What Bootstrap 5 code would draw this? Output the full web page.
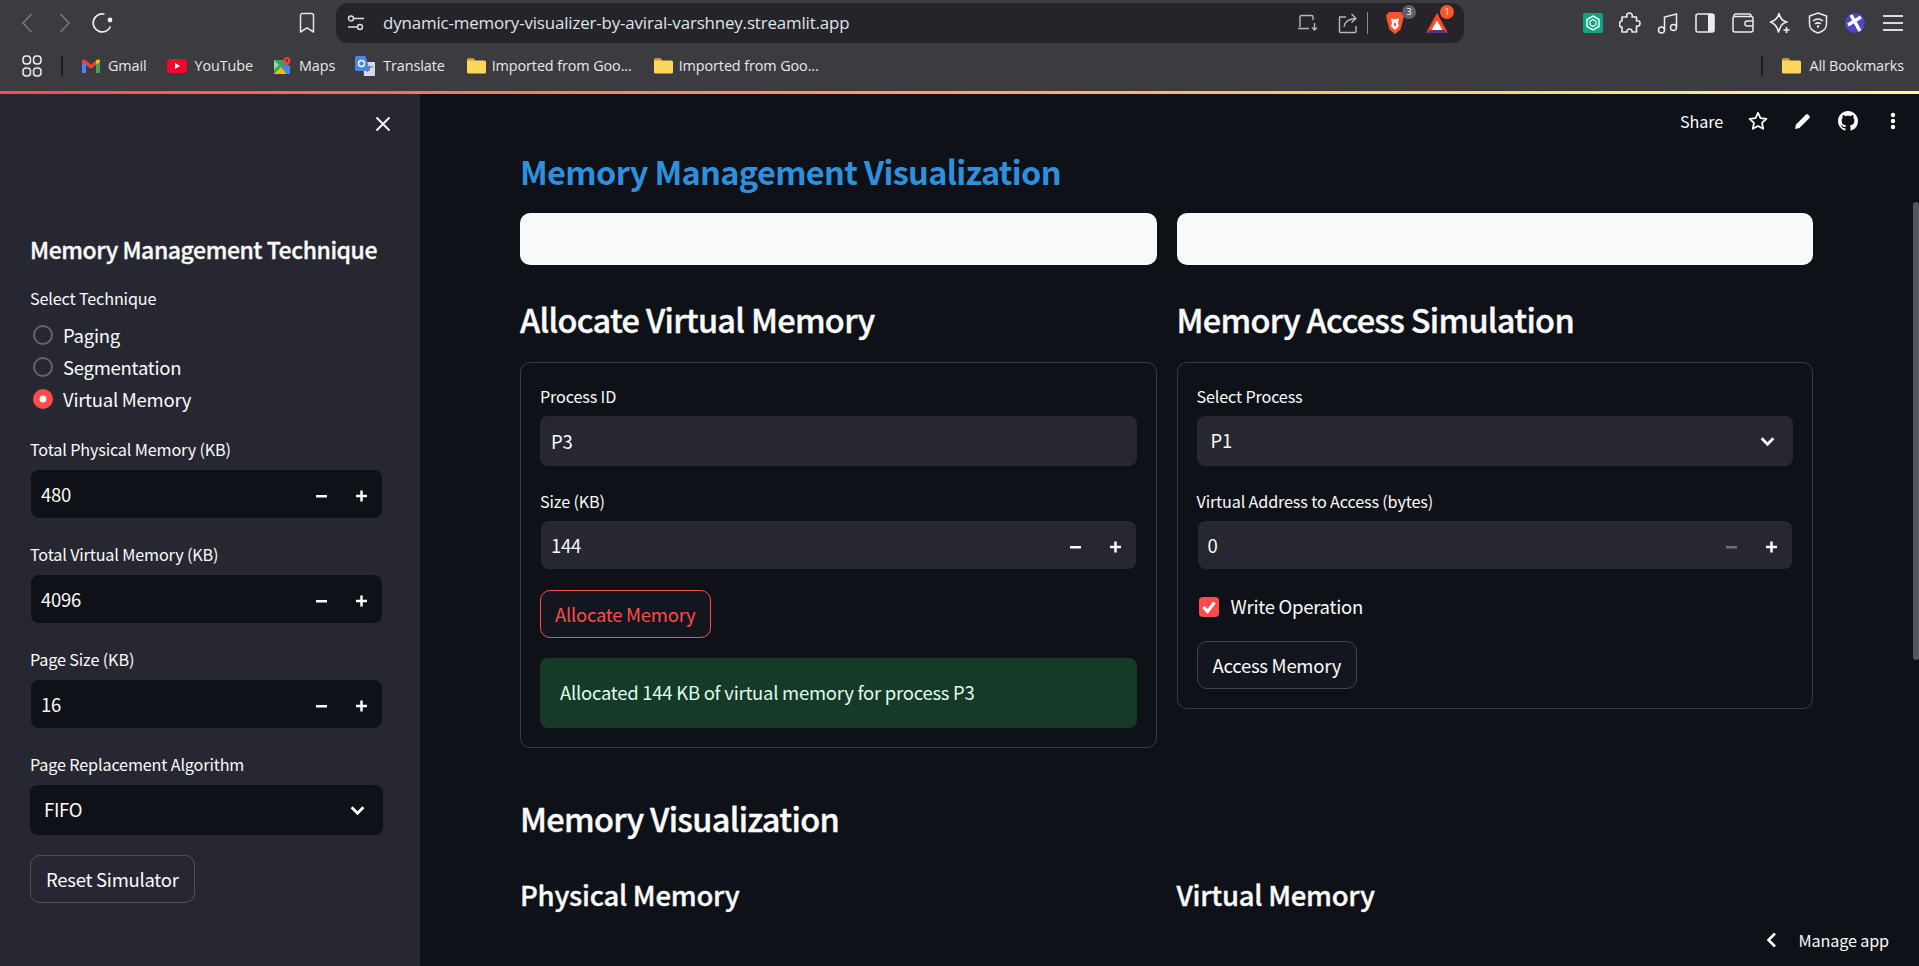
<!DOCTYPE html>
<html lang="en">
<head>
  <meta charset="UTF-8">
  <title>Memory Management Visualization</title>
  <link href="https://cdn.jsdelivr.net/npm/bootstrap@5.3.3/dist/css/bootstrap.min.css" rel="stylesheet">
  <style>
    html, body { height: 100%; }
    body { background: #0e1117; color: #fafafa; overflow: hidden; font-family: "Noto Sans CJK SC", "Noto Sans", sans-serif; font-size: 18.5px; letter-spacing: -.26px; }

    /* browser frame */
    .browser-top { background: #3b3b40; height: 91px; font-family: "Open Sans", "Noto Sans", sans-serif; letter-spacing: 0; }
    .tool-row { height: 44px; padding-top: 1px; }
    .tool-btn { width: 38px; height: 40px; flex: none; }
    .tool-btn svg { display: block; }
    .nav-back { margin-left: 8px; }
    .nav-mark { margin-left: 166px; margin-right: 10px; }
    .url-box { background: #252529; width: 1128px; height: 40px; border-radius: 12px; flex: none; }
    .url-tune { margin-left: 3px; width: 34px; }
    .url-text { color: #dfe3ea; font-size: 16.9px; letter-spacing: -.15px; margin-left: 10px; }
    .url-save { margin-right: -2px; }
    .url-divider { width: 1px; height: 22px; background: #8a8a8e; flex: none; }
    .ext-group { margin-left: 110px; }
    .ext-group .tool-btn { width: 37.5px; }
    .bm-row { height: 46px; padding-bottom: 2px; margin-bottom: 1px; color: #e8e8ea; font-size: 14.4px; letter-spacing: -.1px; }
    .bm-apps { margin-left: 22px; margin-right: 19px; }
    .bm-sep { width: 2px; height: 20px; background: #1d1d20; border-radius: 1px; flex: none; }
    .bm-item { gap: 8px; margin-left: 20px; white-space: nowrap; }
    .bm-item.bm-first { margin-left: 19px; }
    .bm-folder { gap: 6px; margin-left: 22px; }
    .bm-tail { margin-left: auto; margin-right: 15px; }
    .bm-tail .bm-sep { margin-right: 19px; }
    .grad-line { height: 3px; background: linear-gradient(90deg, #ff4b4b, #fffd80); }
    .count-dot { position: absolute; border-radius: 50%; color: #fff; font-size: 9px; line-height: 14px; width: 14px; height: 14px; text-align: center; }
    .dot-gray { background: #5f6068; right: -2px; top: 2px; }
    .dot-red { background: #fb542b; right: 2px; top: 2px; }

    /* app */
    .app-shell { height: 875px; }
    .side-panel { width: 420px; flex: none; background: #262730; padding: 0 37px 0 30px; }
    .close-row { height: 60px; margin-right: -8px; }
    .side-title { font-size: 23px; font-weight: 500; letter-spacing: -.44px; -webkit-text-stroke: .35px #fafafa; line-height: 40px; margin: 75px 0 0; white-space: nowrap; }
    .field-label { display: block; font-size: 16.2px; letter-spacing: -.15px; line-height: 22px; margin: 0 0 9px; }
    .first-label { margin-top: 18px; }
    .radio-row { height: 32px; margin: 0; padding: 0 0 0 33px; display: flex; align-items: center; min-height: 0; }
    .radio-row .form-check-input { width: 20px; height: 20px; margin: 0 0 0 -30px; background-color: transparent; border: 2px solid #63646c; flex: none; }
    .radio-row .form-check-input:checked { background-color: #ff4b4b; border-color: #ff4b4b; background-image: url("data:image/svg+xml,%3csvg xmlns='http://www.w3.org/2000/svg' viewBox='-4 -4 8 8'%3e%3ccircle r='1.7' fill='%23fff'/%3e%3c/svg%3e"); }
    .radio-row .form-check-label { margin-left: 10px; line-height: 32px; }
    .radio-list { margin-top: 10px; margin-bottom: 23px; }
    .side-field { margin-bottom: 24px; }
    .on-side .field-label { margin-bottom: 10px; }
    .on-side .first-label { margin-bottom: 0; }

    .dark-box { background-color: var(--box-bg); color: #fafafa; border: 0; border-radius: 8px; font-size: 18.5px; letter-spacing: -.26px; }
    .on-side { --box-bg: #0e1117; }
    .on-main { --box-bg: #262730; }
    .dark-box:focus { background-color: var(--box-bg); color: #fafafa; box-shadow: none; }
    .plain-input { height: 50px; padding: 0 11px; }
    .pick-box { height: 50px; padding: 0 40px 0 14px; background-repeat: no-repeat; background-image: url("data:image/svg+xml,%3csvg xmlns='http://www.w3.org/2000/svg' viewBox='0 0 14 10'%3e%3cpath d='M1.500 2l5.500 5.500L12.500 2' fill='none' stroke='%23fafafa' stroke-width='2.600'/%3e%3c/svg%3e"); background-position: right 18px center; background-size: 15px 11px; }
    .stepper { height: 48px; margin: 1px; overflow: hidden; }
    .stepper input { background: transparent; border: 0; color: #fafafa; height: 48px; padding: 0 10px; box-shadow: none; font-size: 18.5px; letter-spacing: -.26px; }
    .stepper input:focus { background: transparent; color: #fafafa; box-shadow: none; }
    .step-btn { width: 40px; flex: none; }
    .step-off { opacity: .35; }
    .ghost-btn { height: 48px; font-size: 18.5px; letter-spacing: -.26px; line-height: 1; padding: 0 15px; border-radius: 10px; color: #fafafa; background: #13161e; border: 1px solid #41434c; }
    .on-side .ghost-btn { background: #262730; border-color: #4f505a; }
    .ghost-btn:hover { color: #fafafa; }
    .red-btn { color: #ff4b4b; border-color: #ff4b4b; margin-top: 21px; padding: 0 14px; }
    .red-btn:hover { color: #ff4b4b; }

    .main-pane { padding: 52px 106px 0 100px; min-width: 0; }
    .page-title { color: #2e90dd; font-size: 32.5px; letter-spacing: -.65px; font-weight: 700; line-height: 50px; margin: 0 0 17px; }
    .pane-row { --bs-gutter-x: 20px; --bs-gutter-y: 0; }
    .white-bar { background: #f8f9fa; height: 52px; border-radius: 10px; }
    .head-two { font-size: 32.5px; font-weight: 500; letter-spacing: -.7px; -webkit-text-stroke: .4px #fafafa; line-height: 48px; margin: 30px 0 19px; }
    .head-mem { margin: 46px 0 0; }
    .head-three { font-size: 27.5px; font-weight: 500; letter-spacing: -.25px; -webkit-text-stroke: .35px #fafafa; line-height: 40px; margin: 32px 0 0; }
    .form-frame { border: 1px solid #3a3c44; border-radius: 10px; padding: 22px 19px 19px; }
    .frame-field { margin-bottom: 24px; }
    .note-ok { background: #173928; color: #dffde9; border: 0; border-radius: 8px; height: 70px; padding: 0 20px; margin: 20px 0 0; display: flex; align-items: center; }
    .check-row { height: 24px; margin: 26px 0 22px; padding: 0 0 0 2px; display: flex; align-items: center; min-height: 0; }
    .check-row .form-check-input { width: 20px; height: 20px; margin: 0; float: none; border-radius: 4px; border: 0; background-color: #ff4b4b; background-image: url("data:image/svg+xml,%3csvg xmlns='http://www.w3.org/2000/svg' viewBox='0 0 20 20'%3e%3cpath d='M4.500 10l4 4.500 7-9' fill='none' stroke='%23fff' stroke-width='3.200'/%3e%3c/svg%3e"); background-size: 100% 100%; }
    .check-row .form-check-label { margin-left: 12px; }

    .top-tools { position: absolute; top: 15px; right: 4px; font-size: 16.2px; letter-spacing: -.15px; }
    .top-tools .share-word { margin-right: 12px; }
    .top-tools .tool-slot { width: 45px; display: flex; justify-content: center; }
    .manage-app { position: absolute; right: 30px; bottom: 17px; font-size: 16.2px; letter-spacing: -.15px; line-height: 24px; gap: 22px; }
    .scroll-thumb { position: absolute; right: 0; top: 108px; width: 6px; height: 458px; background: #55575d; border-radius: 3px; }
  </style>
</head>
<body>

<!-- Browser -->
<div class="browser-top">
  <div class="tool-row d-flex align-items-center">
    <div class="tool-btn nav-back d-flex align-items-center justify-content-center">
      <svg width="12" height="20" viewBox="0 0 12 20"><path d="M10.500 1L2 10l8.500 9" fill="none" stroke="#77777c" stroke-width="1.600"/></svg>
    </div>
    <div class="tool-btn d-flex align-items-center justify-content-center">
      <svg width="12" height="20" viewBox="0 0 12 20"><path d="M1.500 1L10 10l-8.500 9" fill="none" stroke="#77777c" stroke-width="1.600"/></svg>
    </div>
    <div class="tool-btn d-flex align-items-center justify-content-center">
      <svg width="22" height="22" viewBox="0 0 22 22"><path d="M18.500 14.500A9 9 0 1 1 12.500 2.200" fill="none" stroke="#f0f0f2" stroke-width="1.700"/><circle cx="18" cy="8" r="2.400" fill="#f0f0f2"/></svg>
    </div>
    <div class="tool-btn nav-mark d-flex align-items-center justify-content-center">
      <svg width="16" height="22" viewBox="0 0 16 22"><path d="M1.500 3.500a2 2 0 0 1 2-2h9a2 2 0 0 1 2 2V20L8 15.800 1.500 20z" fill="none" stroke="#e4e4e6" stroke-width="1.500" stroke-linejoin="round"/></svg>
    </div>
    <div class="url-box d-flex align-items-center">
      <div class="tool-btn url-tune d-flex align-items-center justify-content-center">
        <svg width="18" height="18" viewBox="0 0 18 18"><g fill="none" stroke="#e0e0e2" stroke-width="1.400"><circle cx="4" cy="4.500" r="2.500"/><path d="M6.500 4.500H17M1 13h9.500"/><circle cx="13" cy="13" r="2.500"/></g></svg>
      </div>
      <span class="url-text">dynamic-memory-visualizer-by-aviral-varshney.streamlit.app</span>
      <div class="d-flex align-items-center ms-auto">
        <div class="tool-btn url-save d-flex align-items-center justify-content-center">
          <svg width="22" height="18" viewBox="0 0 22 18"><g fill="none" stroke="#b9b9bc" stroke-width="1.400"><path d="M3 13V3a1.500 1.500 0 0 1 1.500-1.500h10A1.500 1.500 0 0 1 16 3v3M1 14.500h11"/><path d="M17.500 9v7M15 13.500l2.500 2.500 2.500-2.500"/></g></svg>
        </div>
        <div class="tool-btn d-flex align-items-center justify-content-center ms-1">
          <svg width="22" height="22" viewBox="0 0 22 22"><g fill="none" stroke="#b9b9bc" stroke-width="1.400" stroke-linejoin="round"><path d="M9 5H2.500v14.500a1 1 0 0 0 1 1H18a1 1 0 0 0 1-1V14"/><path d="M7 15c.6-5 4-8 11.500-8.500M14.500 2l4.500 4.500-4.500 4"/></g></svg>
        </div>
        <div class="url-divider"></div>
        <div class="tool-btn position-relative d-flex align-items-center justify-content-center ms-2">
          <svg width="20" height="24" viewBox="0 0 20 24"><path d="M4 1h12l3 3.500-1 5-2.500 9L10 23l-5.500-4.500L2 9.500l-1-5z" fill="#fb542b"/><path d="M6 7l2 1h4l2-1-1 5 1 3-4 4-4-4 1-3z" fill="#fff"/><path d="M9 12h2v3H9z" fill="#fb542b"/></svg>
          <span class="count-dot dot-gray">3</span>
        </div>
        <div class="tool-btn position-relative d-flex align-items-center justify-content-center ms-1 me-2">
          <svg width="24" height="22" viewBox="0 0 24 22"><path d="M12 1l11 20H1z" fill="#ff4724"/><path d="M1 21l4-3h14l4 3z" fill="#662d91"/><path d="M12 8.500l5.500 9.500h-11z" fill="#fff"/></svg>
          <span class="count-dot dot-red">1</span>
        </div>
      </div>
    </div>
    <div class="ext-group d-flex align-items-center">
      <div class="tool-btn d-flex align-items-center justify-content-center">
        <svg width="20" height="20" viewBox="0 0 20 20"><rect width="20" height="20" rx="2" fill="#10a37f"/><path d="M10 3l6 3.500v7L10 17l-6-3.500v-7z" fill="none" stroke="#e8fff8" stroke-width="1.500"/><path d="M10 6.500l3 1.750v3.500l-3 1.750-3-1.750v-3.500z" fill="none" stroke="#e8fff8" stroke-width="1.200"/></svg>
      </div>
      <div class="tool-btn d-flex align-items-center justify-content-center">
        <svg width="22" height="22" viewBox="0 0 22 22"><path d="M8 5c-1-3 1-4 2.500-4S14 2.500 13 5h4.500v4c3-1 3.500 1 3.500 2.500S20 15 17.500 14v6H13c.5-2-1-3-2.500-3S7.500 18 8 20H3v-5c-2 .5-2.500-1.500-2.500-3S2 8.500 3 9V5z" fill="none" stroke="#ececee" stroke-width="1.600" stroke-linejoin="round"/></svg>
      </div>
      <div class="tool-btn d-flex align-items-center justify-content-center">
        <svg width="22" height="22" viewBox="0 0 22 22"><g fill="none" stroke="#ececee" stroke-width="1.500"><circle cx="4.500" cy="18" r="3"/><circle cx="16.500" cy="15.500" r="3"/><path d="M7.500 18V5L19.500 2v13.500"/></g></svg>
      </div>
      <div class="tool-btn d-flex align-items-center justify-content-center">
        <svg width="20" height="20" viewBox="0 0 20 20"><rect x="1" y="1" width="18" height="18" rx="2" fill="none" stroke="#ececee" stroke-width="1.600"/><rect x="13" y="1" width="6" height="18" fill="#ececee"/></svg>
      </div>
      <div class="tool-btn d-flex align-items-center justify-content-center">
        <svg width="22" height="20" viewBox="0 0 22 20"><g fill="none" stroke="#ececee" stroke-width="1.500"><rect x="1" y="3.500" width="20" height="15.500" rx="2"/><path d="M2 3c0-1.500 1-2 2-2h13c1.500 0 2 1 2 2.500"/><path d="M21 8h-6a2 2 0 0 0-2 2v1a2 2 0 0 0 2 2h6"/></g></svg>
      </div>
      <div class="tool-btn d-flex align-items-center justify-content-center">
        <svg width="22" height="22" viewBox="0 0 22 22"><path d="M10 1.500c1 5 3 7.500 8 8.500-4 1-6 3-7 6-.5 1.500-1 2.500-1.500 4-1-5-3-8-8-10 5-1.500 7.500-4 8.500-8.500z" fill="none" stroke="#ececee" stroke-width="1.600" stroke-linejoin="round"/><path d="M17.500 15v6M14.500 18h6" stroke="#ececee" stroke-width="1.600"/></svg>
      </div>
      <div class="tool-btn d-flex align-items-center justify-content-center">
        <svg width="20" height="22" viewBox="0 0 20 22"><g fill="none" stroke="#ececee" stroke-width="1.500"><path d="M10 1l8.500 3v8c0 4.500-3.500 7.500-8.500 9-5-1.500-8.500-4.500-8.500-9V4z"/><path d="M5 9c3-2.500 7-2.500 10 0M7 12c2-1.500 4-1.500 6 0"/></g><circle cx="10" cy="14.500" r="1.200" fill="#ececee"/></svg>
      </div>
      <div class="tool-btn d-flex align-items-center justify-content-center">
        <svg width="20" height="20" viewBox="0 0 20 20"><circle cx="10" cy="10" r="10" fill="#4d47c3"/><path d="M6 2l9 16M16 4L3 12" fill="none" stroke="#fff" stroke-width="3.400"/></svg>
      </div>
      <div class="tool-btn d-flex align-items-center justify-content-center">
        <svg width="22" height="18" viewBox="0 0 22 18"><path d="M1 2h20M1 9h20M1 16h20" stroke="#dcdcde" stroke-width="1.800"/></svg>
      </div>
    </div>
  </div>
  <div class="bm-row d-flex align-items-center">
    <div class="bm-apps">
      <svg width="20" height="22" viewBox="0 0 20 22" class="d-block"><g fill="none" stroke="#ececee" stroke-width="1.500"><rect x="1" y="1" width="7.500" height="8" rx="3.200"/><rect x="11.500" y="1" width="7.500" height="8" rx="3.200"/><rect x="1" y="13" width="7.500" height="8" rx="3.200"/><rect x="11.500" y="13" width="7.500" height="8" rx="3.200"/></g></svg>
    </div>
    <div class="bm-sep"></div>
    <div class="bm-item bm-first d-flex align-items-center">
      <svg width="18" height="14" viewBox="0 0 18 14"><path d="M0 2v11a1 1 0 0 0 1 1h3V6z" fill="#4285f4"/><path d="M18 2v11a1 1 0 0 1-1 1h-3V6z" fill="#34a853"/><path d="M14 1.500V6l4-3V2c0-1.500-1.500-2-3-1.200z" fill="#fbbc04"/><path d="M0 3V2C0 .5 1.500 0 3 .8L9 5.500 14 1.500V6L9 9.800 0 3z" fill="#ea4335"/></svg>
      <span>Gmail</span>
    </div>
    <div class="bm-item d-flex align-items-center">
      <svg width="20" height="14" viewBox="0 0 20 14"><rect width="20" height="14" rx="3.500" fill="#f5052d"/><path d="M8 4l5 3-5 3z" fill="#fff"/></svg>
      <span>YouTube</span>
    </div>
    <div class="bm-item d-flex align-items-center">
      <svg width="18" height="18" viewBox="0 0 18 18"><path d="M1 3h11v14H1z" fill="#34a853"/><path d="M1 17l7-7 6 7z" fill="#fbbc04"/><path d="M8 10l6 7h3V9l-4-2z" fill="#4285f4"/><path d="M1 3l5 5-5 5z" fill="#fff" opacity=".5"/><path d="M14 0a3.500 3.500 0 0 1 3.500 3.500C17.500 6 14 9 14 9s-3.500-3-3.500-5.500A3.500 3.500 0 0 1 14 0z" fill="#ea4335"/><circle cx="14" cy="3.500" r="1.200" fill="#8e1c14"/></svg>
      <span>Maps</span>
    </div>
    <div class="bm-item d-flex align-items-center">
      <svg width="20" height="20" viewBox="0 0 20 20"><path d="M8 6h11a1 1 0 0 1 1 1v12a1 1 0 0 1-1 1H9z" fill="#d4dbe6"/><path d="M1.500 0h9L15 15H1.500A1.500 1.500 0 0 1 0 13.500v-12A1.500 1.500 0 0 1 1.500 0z" fill="#4a86e8"/><circle cx="6.500" cy="7.500" r="3" fill="none" stroke="#fff" stroke-width="1.400"/><path d="M12 11h6M15 9.500c-.2 3-1.500 5-3 6.500" stroke="#6b7586" stroke-width="1" fill="none"/></svg>
      <span>Translate</span>
    </div>
    <div class="bm-item bm-folder d-flex align-items-center">
      <svg width="19" height="16" viewBox="0 0 19 16"><path d="M0 2a1.500 1.500 0 0 1 1.500-1.500h5L8 2.500h9.500A1.500 1.500 0 0 1 19 4v10a1.500 1.500 0 0 1-1.500 1.500h-16A1.500 1.500 0 0 1 0 14z" fill="#ffd65c"/><path d="M0 2a1.500 1.500 0 0 1 1.500-1.500h5L8 2.500H0z" fill="#d49b1f"/></svg>
      <span>Imported from Goo...</span>
    </div>
    <div class="bm-item bm-folder d-flex align-items-center">
      <svg width="19" height="16" viewBox="0 0 19 16"><path d="M0 2a1.500 1.500 0 0 1 1.500-1.500h5L8 2.500h9.500A1.500 1.500 0 0 1 19 4v10a1.500 1.500 0 0 1-1.500 1.500h-16A1.500 1.500 0 0 1 0 14z" fill="#ffd65c"/><path d="M0 2a1.500 1.500 0 0 1 1.500-1.500h5L8 2.500H0z" fill="#d49b1f"/></svg>
      <span>Imported from Goo...</span>
    </div>
    <div class="bm-tail d-flex align-items-center">
      <div class="bm-sep"></div>
      <div class="d-flex align-items-center gap-2">
        <svg width="19" height="16" viewBox="0 0 19 16"><path d="M0 2a1.500 1.500 0 0 1 1.500-1.500h5L8 2.500h9.500A1.500 1.500 0 0 1 19 4v10a1.500 1.500 0 0 1-1.500 1.500h-16A1.500 1.500 0 0 1 0 14z" fill="#ffd65c"/><path d="M0 2a1.500 1.500 0 0 1 1.500-1.500h5L8 2.500H0z" fill="#d49b1f"/></svg>
        <span>All Bookmarks</span>
      </div>
    </div>
  </div>
</div>
<div class="grad-line"></div>

<div class="app-shell d-flex">
  <!-- Sidebar -->
  <aside class="side-panel on-side d-flex flex-column">
    <div class="close-row d-flex justify-content-end align-items-center">
      <svg width="16" height="16" viewBox="0 0 16 16"><path d="M1.500 1.500l13 13M14.500 1.500l-13 13" stroke="#fafafa" stroke-width="1.800"/></svg>
    </div>
    <h2 class="side-title">Memory Management Technique</h2>
    <label class="field-label first-label">Select Technique</label>
    <div class="radio-list">
      <div class="form-check radio-row">
        <input class="form-check-input" type="radio" name="tech" id="t1">
        <label class="form-check-label" for="t1">Paging</label>
      </div>
      <div class="form-check radio-row">
        <input class="form-check-input" type="radio" name="tech" id="t2">
        <label class="form-check-label" for="t2">Segmentation</label>
      </div>
      <div class="form-check radio-row">
        <input class="form-check-input" type="radio" name="tech" id="t3" checked>
        <label class="form-check-label" for="t3">Virtual Memory</label>
      </div>
    </div>
    <div class="side-field">
      <label class="field-label">Total Physical Memory (KB)</label>
      <div class="stepper dark-box d-flex align-items-center">
        <input class="form-control" value="480">
        <div class="step-btn text-center"><svg width="12" height="3" viewBox="0 0 12 3" class="d-inline-block"><rect width="11" height="2.500" fill="#fafafa"/></svg></div>
        <div class="step-btn text-center"><svg width="12" height="12" viewBox="0 0 12 12" class="d-inline-block"><path d="M0 6h11M5.500 .5v11" stroke="#fafafa" stroke-width="2.500"/></svg></div>
      </div>
    </div>
    <div class="side-field">
      <label class="field-label">Total Virtual Memory (KB)</label>
      <div class="stepper dark-box d-flex align-items-center">
        <input class="form-control" value="4096">
        <div class="step-btn text-center"><svg width="12" height="3" viewBox="0 0 12 3" class="d-inline-block"><rect width="11" height="2.500" fill="#fafafa"/></svg></div>
        <div class="step-btn text-center"><svg width="12" height="12" viewBox="0 0 12 12" class="d-inline-block"><path d="M0 6h11M5.500 .5v11" stroke="#fafafa" stroke-width="2.500"/></svg></div>
      </div>
    </div>
    <div class="side-field">
      <label class="field-label">Page Size (KB)</label>
      <div class="stepper dark-box d-flex align-items-center">
        <input class="form-control" value="16">
        <div class="step-btn text-center"><svg width="12" height="3" viewBox="0 0 12 3" class="d-inline-block"><rect width="11" height="2.500" fill="#fafafa"/></svg></div>
        <div class="step-btn text-center"><svg width="12" height="12" viewBox="0 0 12 12" class="d-inline-block"><path d="M0 6h11M5.500 .5v11" stroke="#fafafa" stroke-width="2.500"/></svg></div>
      </div>
    </div>
    <div>
      <label class="field-label">Page Replacement Algorithm</label>
      <select class="form-select dark-box pick-box"><option>FIFO</option><option>LRU</option></select>
    </div>
    <div class="mt-3 pt-1">
      <button type="button" class="btn ghost-btn">Reset Simulator</button>
    </div>
  </aside>

  <!-- Main -->
  <main class="main-pane on-main flex-grow-1 position-relative">
    <div class="top-tools d-flex align-items-center">
      <span class="share-word">Share</span>
      <div class="tool-slot"><svg width="20" height="20" viewBox="0 0 20 20"><path d="M10 1.800l2.500 5.400 5.900.7-4.400 4 1.200 5.900L10 15l-5.200 2.800L6 11.900l-4.400-4 5.900-.7z" fill="none" stroke="#fafafa" stroke-width="1.800" stroke-linejoin="round"/></svg></div>
      <div class="tool-slot"><svg width="18" height="18" viewBox="0 0 18 18"><path d="M1 17l1-4.500L12 2.500a1.500 1.500 0 0 1 2 0l1.500 1.500a1.500 1.500 0 0 1 0 2L5.500 16z" fill="#fafafa"/></svg></div>
      <div class="tool-slot"><svg width="20" height="20" viewBox="0 0 16 16"><path d="M8 0C3.580 0 0 3.580 0 8c0 3.540 2.290 6.530 5.470 7.590.4.070.55-.17.55-.38 0-.19-.01-.82-.01-1.490-2.010.37-2.530-.49-2.690-.94-.09-.23-.48-.94-.82-1.130-.28-.15-.68-.52-.01-.53.630-.01 1.080.58 1.230.82.720 1.210 1.870.87 2.330.66.070-.52.280-.87.510-1.070-1.780-.2-3.640-.89-3.640-3.950 0-.87.310-1.590.820-2.150-.08-.2-.36-1.020.080-2.120 0 0 .67-.21 2.200.82.640-.18 1.320-.27 2-.27.680 0 1.360.09 2 .27 1.530-1.040 2.200-.82 2.200-.82.440 1.100.160 1.920.080 2.120.510.560.820 1.270.820 2.150 0 3.070-1.870 3.750-3.650 3.950.290.250.540.730.540 1.480 0 1.070-.01 1.930-.01 2.200 0 .21.150.46.550.38A8.013 8.013 0 0016 8c0-4.420-3.580-8-8-8z" fill="#fafafa"/></svg></div>
      <div class="tool-slot"><svg width="6" height="18" viewBox="0 0 6 18"><circle cx="3" cy="3" r="2.200" fill="#fafafa"/><circle cx="3" cy="9" r="2.200" fill="#fafafa"/><circle cx="3" cy="15" r="2.200" fill="#fafafa"/></svg></div>
    </div>

    <h1 class="page-title">Memory Management Visualization</h1>
    <div class="row pane-row">
      <div class="col-6"><div class="white-bar"></div></div>
      <div class="col-6"><div class="white-bar"></div></div>
    </div>

    <div class="row pane-row align-items-start">
      <div class="col-6">
        <h2 class="head-two">Allocate Virtual Memory</h2>
        <div class="form-frame">
          <div class="frame-field">
            <label class="field-label">Process ID</label>
            <input class="form-control dark-box plain-input" value="P3">
          </div>
          <div>
            <label class="field-label">Size (KB)</label>
            <div class="stepper dark-box d-flex align-items-center">
              <input class="form-control" value="144">
              <div class="step-btn text-center"><svg width="12" height="3" viewBox="0 0 12 3" class="d-inline-block"><rect width="11" height="2.500" fill="#fafafa"/></svg></div>
              <div class="step-btn text-center"><svg width="12" height="12" viewBox="0 0 12 12" class="d-inline-block"><path d="M0 6h11M5.500 .5v11" stroke="#fafafa" stroke-width="2.500"/></svg></div>
            </div>
          </div>
          <button type="button" class="btn ghost-btn red-btn d-block">Allocate Memory</button>
          <div class="alert note-ok" role="alert">Allocated 144 KB of virtual memory for process P3</div>
        </div>
      </div>
      <div class="col-6">
        <h2 class="head-two">Memory Access Simulation</h2>
        <div class="form-frame">
          <div class="frame-field">
            <label class="field-label">Select Process</label>
            <select class="form-select dark-box pick-box"><option>P1</option><option>P2</option><option>P3</option></select>
          </div>
          <div>
            <label class="field-label">Virtual Address to Access (bytes)</label>
            <div class="stepper dark-box d-flex align-items-center">
              <input class="form-control" value="0">
              <div class="step-btn text-center step-off"><svg width="12" height="3" viewBox="0 0 12 3" class="d-inline-block"><rect width="11" height="2.500" fill="#fafafa"/></svg></div>
              <div class="step-btn text-center"><svg width="12" height="12" viewBox="0 0 12 12" class="d-inline-block"><path d="M0 6h11M5.500 .5v11" stroke="#fafafa" stroke-width="2.500"/></svg></div>
            </div>
          </div>
          <div class="form-check check-row">
            <input class="form-check-input" type="checkbox" id="writeOp" checked>
            <label class="form-check-label" for="writeOp">Write Operation</label>
          </div>
          <button type="button" class="btn ghost-btn d-block">Access Memory</button>
        </div>
      </div>
    </div>

    <h2 class="head-two head-mem">Memory Visualization</h2>
    <div class="row pane-row">
      <div class="col-6"><h3 class="head-three">Physical Memory</h3></div>
      <div class="col-6"><h3 class="head-three">Virtual Memory</h3></div>
    </div>

    <div class="scroll-thumb"></div>
    <div class="manage-app d-flex align-items-center">
      <svg width="11" height="16" viewBox="0 0 11 16"><path d="M9 1.500L2.500 8 9 14.500" fill="none" stroke="#fafafa" stroke-width="2.600"/></svg>
      <span>Manage app</span>
    </div>
  </main>
</div>

<script src="https://cdn.jsdelivr.net/npm/bootstrap@5.3.3/dist/js/bootstrap.bundle.min.js"></script>
</body>
</html>
